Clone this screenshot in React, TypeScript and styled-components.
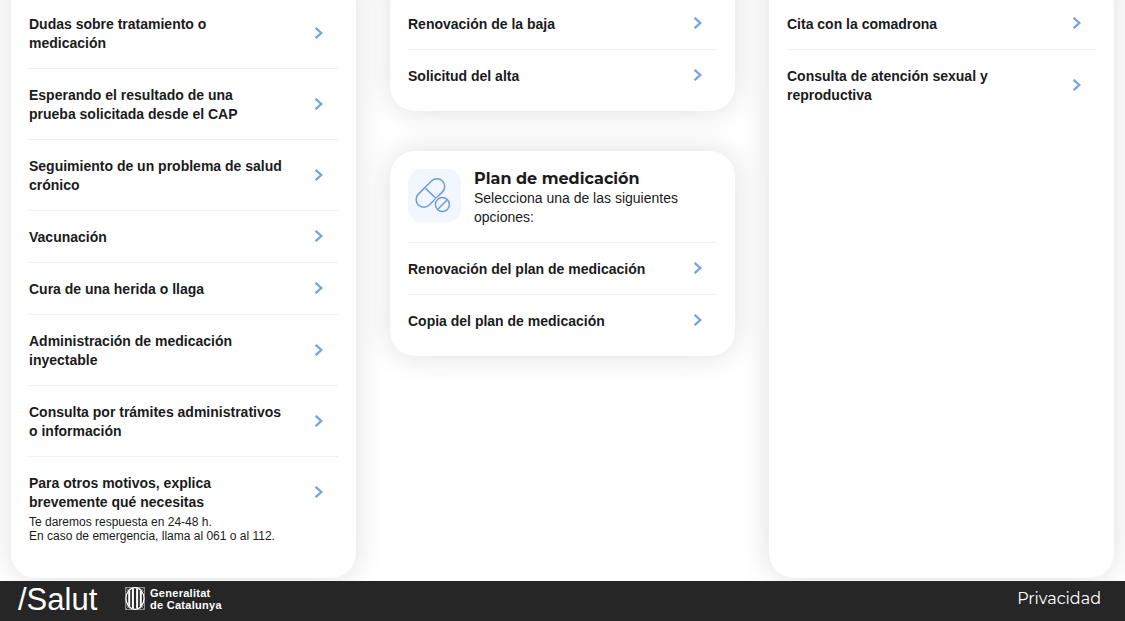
import React from 'react';
import styled, { createGlobalStyle } from 'styled-components';

const Global = createGlobalStyle`
  * { box-sizing: border-box; }
  body {
    margin: 0;
    background: #fff;
    color: #1b1b1b;
    font-family: Arial, "Liberation Sans", sans-serif;
    font-size: 14px;
    line-height: 19px;
  }
`;

const Page = styled.div`
  display: flex;
  flex-direction: column;
  height: 621px;
  overflow: hidden;
`;

const Columns = styled.main`
  flex: 1;
  min-height: 0;
  display: grid;
  grid-template-columns: repeat(3, 345px);
  grid-template-rows: 618px;
  gap: 34px;
  margin-top: -40px;
  padding: 0 11px;
`;

const Column = styled.div`
  display: flex;
  flex-direction: column;
  gap: 40px;
`;

const Card = styled.section<{ $top?: number; $grow?: boolean }>`
  flex: ${(p) => (p.$grow ? '1' : 'none')};
  padding: ${(p) => p.$top ?? 18}px 18px 10px;
  border-radius: 25px;
  background: #fff;
  box-shadow: 0 0 30px rgba(0, 0, 0, 0.13);
`;

const Row = styled.div`
  display: flex;
  justify-content: space-between;
  align-items: flex-start;
  padding: 17px 15px 15px 0;
  border-bottom: 1px solid #f0f0f0;
  &:last-child { border-bottom: 0; }
`;

const Title = styled.div`
  width: 256px;
  font-weight: 700;
`;

const Note = styled.p`
  margin: 3px 0 0;
  font-size: 12px;
  line-height: 14px;
  white-space: nowrap;
`;

const Arrow = styled.svg<{ $lines: number }>`
  flex: none;
  width: 9px;
  height: 12px;
  margin-top: ${(p) => (p.$lines === 1 ? 2 : 12)}px;
`;

const CardHead = styled.header`
  display: flex;
  gap: 13px;
  height: 74px;
  border-bottom: 1px solid #f0f0f0;
`;

const IconTile = styled.div`
  flex: none;
  width: 53px;
  height: 53px;
  border-radius: 13px;
  background: #f2f7ff;
`;

const Heading = styled.h2`
  margin: 0;
  padding-bottom: 1px;
  font: 700 16px/19px Montserrat, Inter, sans-serif;
  white-space: nowrap;
`;

const Intro = styled.p`
  margin: 0;
  width: 225px;
`;

const Footer = styled.footer`
  display: flex;
  align-items: center;
  height: 40px;
  padding: 0 24px 0 18px;
  background: #262626;
  color: #fff;
`;

const Salut = styled.span`
  width: 107px;
  font-size: 31px;
  line-height: 36px;
  padding-bottom: 2px;
`;

const Government = styled.div`
  display: flex;
  gap: 5px;
  font-size: 11px;
  font-weight: 700;
  letter-spacing: 0.28px;
  line-height: 12px;
  padding-bottom: 4px;
  white-space: nowrap;
`;

const Privacy = styled.a`
  margin-left: auto;
  font: 400 16px/20px Montserrat, Inter, sans-serif;
  padding-bottom: 5px;
`;

const Option = ({ lines, note }: { lines: string[]; note?: string[] }) => (
  <Row>
    <div>
      <Title>
        {lines.map((l) => <div key={l}>{l}</div>)}
      </Title>
      {note && <Note>{note[0]}<br />{note[1]}</Note>}
    </div>
    <Arrow $lines={lines.length} viewBox="0 0 9 12" fill="none" stroke="#75a3e3" strokeWidth="2.3">
      <path d="M1.6 .8 7.3 6 1.6 11.2" />
    </Arrow>
  </Row>
);

const Pills = () => (
  <svg width="53" height="53" viewBox="0 0 53 53" fill="none" stroke="#6c9ce0" strokeWidth="1.5">
    <rect x="-17" y="-7.7" width="34" height="15.4" rx="7.7" transform="translate(22.4 24) rotate(-45)" />
    <path d="m17.6 19.4 10 9.6" />
    <circle cx="34.4" cy="35.5" r="8" fill="#f2f7ff" stroke="#f2f7ff" />
    <circle cx="34.4" cy="35.5" r="7" />
    <path d="m29.6 40.5 9.7-9.8" />
  </svg>
);

const Shield = () => (
  <svg width="20" height="23" viewBox="0 0 20 23" fill="none" stroke="#fff">
    <rect x=".5" y=".5" width="19" height="22" stroke="#aaa" strokeWidth=".8" />
    <path d="M1 1l4 4M19 1l-4 4M1 22l4-4M19 22l-4-4M1 5l4-4M15 1l4 4M1 18l4 4M19 18l-4 4" stroke="#999" strokeWidth=".7" />
    <ellipse cx="10" cy="11.5" rx="9" ry="10.8" fill="#262626" strokeWidth="1.2" />
    <path d="M4.2 4v15M7.9 1.5v20M12.1 1.5v20M15.8 4v15" strokeWidth="2" />
  </svg>
);

export default function App() {
  return (
    <>
      <Global />
      <Page>
        <Columns>
          <Column>
            <Card $top={38} $grow>
              <Option lines={['Dudas sobre tratamiento o', 'medicación']} />
              <Option lines={['Esperando el resultado de una', 'prueba solicitada desde el CAP']} />
              <Option lines={['Seguimiento de un problema de salud', 'crónico']} />
              <Option lines={['Vacunación']} />
              <Option lines={['Cura de una herida o llaga']} />
              <Option lines={['Administración de medicación', 'inyectable']} />
              <Option lines={['Consulta por trámites administrativos', 'o información']} />
              <Option
                lines={['Para otros motivos, explica', 'brevemente qué necesitas']}
                note={['Te daremos respuesta en 24-48 h.', 'En caso de emergencia, llama al 061 o al 112.']}
              />
            </Card>
          </Column>
          <Column>
            <Card $top={38}>
              <Option lines={['Renovación de la baja']} />
              <Option lines={['Solicitud del alta']} />
            </Card>
            <Card>
              <CardHead>
                <IconTile><Pills /></IconTile>
                <div>
                  <Heading>Plan de medicación</Heading>
                  <Intro>Selecciona una de las siguientes opciones:</Intro>
                </div>
              </CardHead>
              <Option lines={['Renovación del plan de medicación']} />
              <Option lines={['Copia del plan de medicación']} />
            </Card>
          </Column>
          <Column>
            <Card $top={38} $grow>
              <Option lines={['Cita con la comadrona']} />
              <Option lines={['Consulta de atención sexual y', 'reproductiva']} />
            </Card>
          </Column>
        </Columns>
        <Footer>
          <Salut>/Salut</Salut>
          <Government>
            <Shield />
            <div>Generalitat<br />de Catalunya</div>
          </Government>
          <Privacy>Privacidad</Privacy>
        </Footer>
      </Page>
    </>
  );
}
